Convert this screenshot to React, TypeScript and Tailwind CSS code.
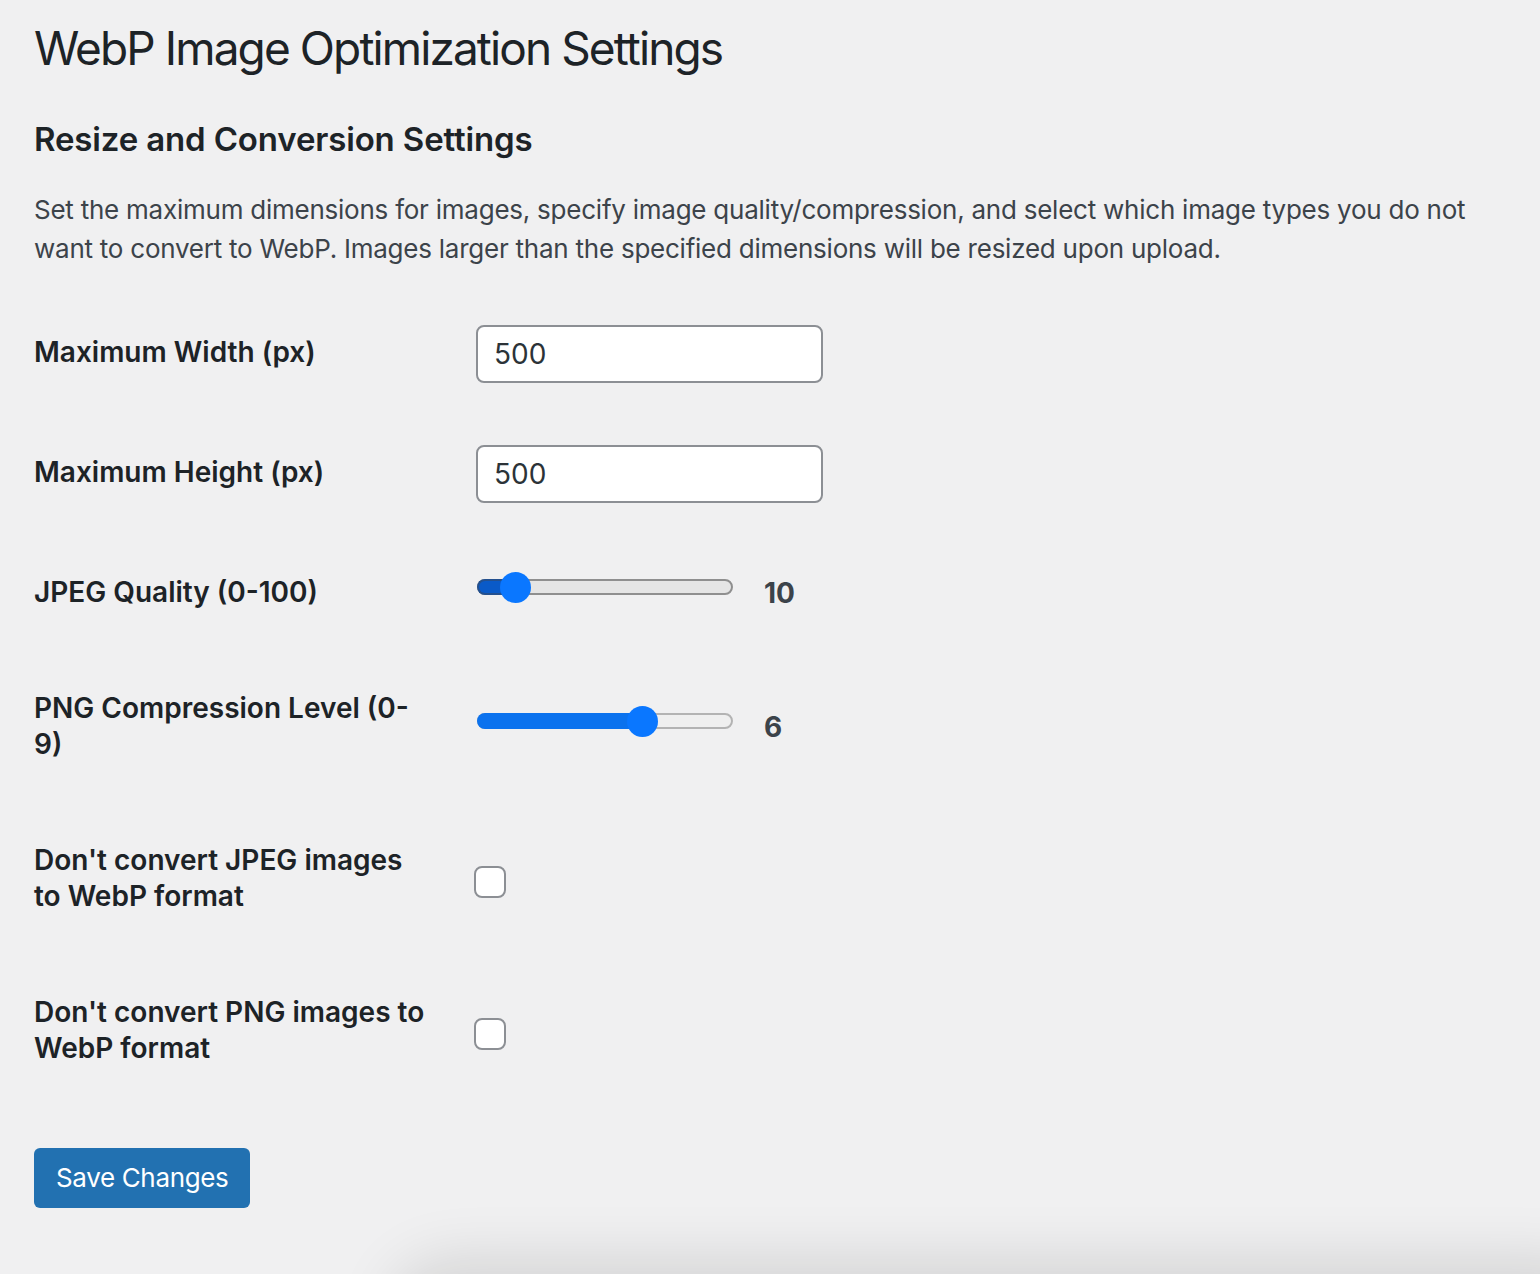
import React from "react";

const font = "font-['Inter','Noto_Sans',sans-serif]";

function Slider({ value, max, active }: { value: number; max: number; active?: boolean }) {
  // thumb center = left + r + (w - 2r) * p
  const p = value / max;
  const thumbLeft = (256 - 31) * p;
  return (
    <div
      className={
        "relative w-[256px] h-[16px] rounded-full border-2 " +
        (active ? "bg-[#e5e5e5] border-[#8f8f8f]" : "bg-[#efefef] border-[#b3b3b3]")
      }
    >
      <div
        className={
          "absolute -left-[2px] -top-[2px] h-[16px] rounded-l-full " +
          (active ? "bg-[#0a5ac8] border-2 border-r-0 border-[#23508f]" : "bg-[#0b72ee]")
        }
        style={{ width: thumbLeft + 16 }}
      />
      <div
        className="absolute -top-[9.5px] w-[31px] h-[31px] rounded-full bg-[#0a77ff]"
        style={{ left: thumbLeft - 2 }}
      />
    </div>
  );
}

function Row({ label, children }: { label: React.ReactNode; children: React.ReactNode }) {
  return (
    <div className="flex items-stretch">
      <div className="w-[420px] shrink-0 pt-[40px] pb-[40px] pr-[20px] text-[28px] leading-[36px] font-semibold text-[#1d2327] whitespace-nowrap">
        {label}
      </div>
      <div className="flex items-center px-[20px] py-[30px]">{children}</div>
    </div>
  );
}

function TextInput({ value }: { value: string }) {
  return (
    <div className="my-[1px] ml-[2px] w-[347px] h-[58px] rounded-[8px] border-2 border-[#8c8f94] bg-white px-[16px] flex items-center text-[28px] text-[#2c3338]">
      {value}
    </div>
  );
}

function Checkbox() {
  return <div className="mt-[8px] w-[32px] h-[32px] rounded-[8px] border-2 border-[#8c8f94] bg-white" />;
}

export default function App() {
  return (
    <div className={"relative min-h-[1274px] overflow-hidden bg-[#f0f0f1] px-[34px] pt-[18px] text-[#3c434a] " + font}>
      <h1 className="text-[46px] leading-[60px] font-normal text-[#1d2327] tracking-[-1.9px] whitespace-nowrap">
        WebP Image Optimization Settings
      </h1>
      <h2 className="mt-[40px] text-[33px] leading-[43px] font-semibold text-[#1d2327] tracking-[-0.15px]">
        Resize and Conversion Settings
      </h2>
      <p className="mt-[29px] text-[26px] leading-[39px] text-[#3c434a] tracking-[-0.24px] whitespace-nowrap">
        Set the maximum dimensions for images, specify image quality/compression, and select which image types you do not
        <br />
        want to convert to WebP. Images larger than the specified dimensions will be resized upon upload.
      </p>

      <div className="mt-[26px] flex flex-col">
        <Row label="Maximum Width (px)">
          <TextInput value="500" />
        </Row>
        <Row label="Maximum Height (px)">
          <TextInput value="500" />
        </Row>
        <Row label="JPEG Quality (0-100)">
          <div className="flex items-center">
            <div className="ml-[3px] -mt-[10px]">
              <Slider value={10} max={100} active />
            </div>
            <span className="ml-[31px] mt-[2px] text-[28px] font-bold text-[#3c434a]">10</span>
          </div>
        </Row>
        <Row
          label={
            <>
              PNG Compression Level (0-
              <br />
              9)
            </>
          }
        >
          <div className="flex items-center">
            <div className="ml-[3px] -mt-[10px]">
              <Slider value={6} max={9} />
            </div>
            <span className="ml-[31px] mt-[2px] text-[28px] font-bold text-[#3c434a]">6</span>
          </div>
        </Row>
        <Row
          label={
            <>
              Don't convert JPEG images
              <br />
              to WebP format
            </>
          }
        >
          <Checkbox />
        </Row>
        <Row
          label={
            <>
              Don't convert PNG images to
              <br />
              WebP format
            </>
          }
        >
          <Checkbox />
        </Row>
      </div>

      <div className="mt-[42px]">
        <button className="h-[60px] px-[22px] rounded-[6px] bg-[#2271b1] text-white text-[26px] leading-[60px] tracking-[-0.35px]">
          Save Changes
        </button>
      </div>

      {/* soft window shadow at the bottom edge */}
      <div className="pointer-events-none absolute left-[420px] right-[-40px] top-[1290px] h-[60px] rounded-[40px] shadow-[0_0_60px_30px_rgba(0,0,0,0.12)]" />
    </div>
  );
}
